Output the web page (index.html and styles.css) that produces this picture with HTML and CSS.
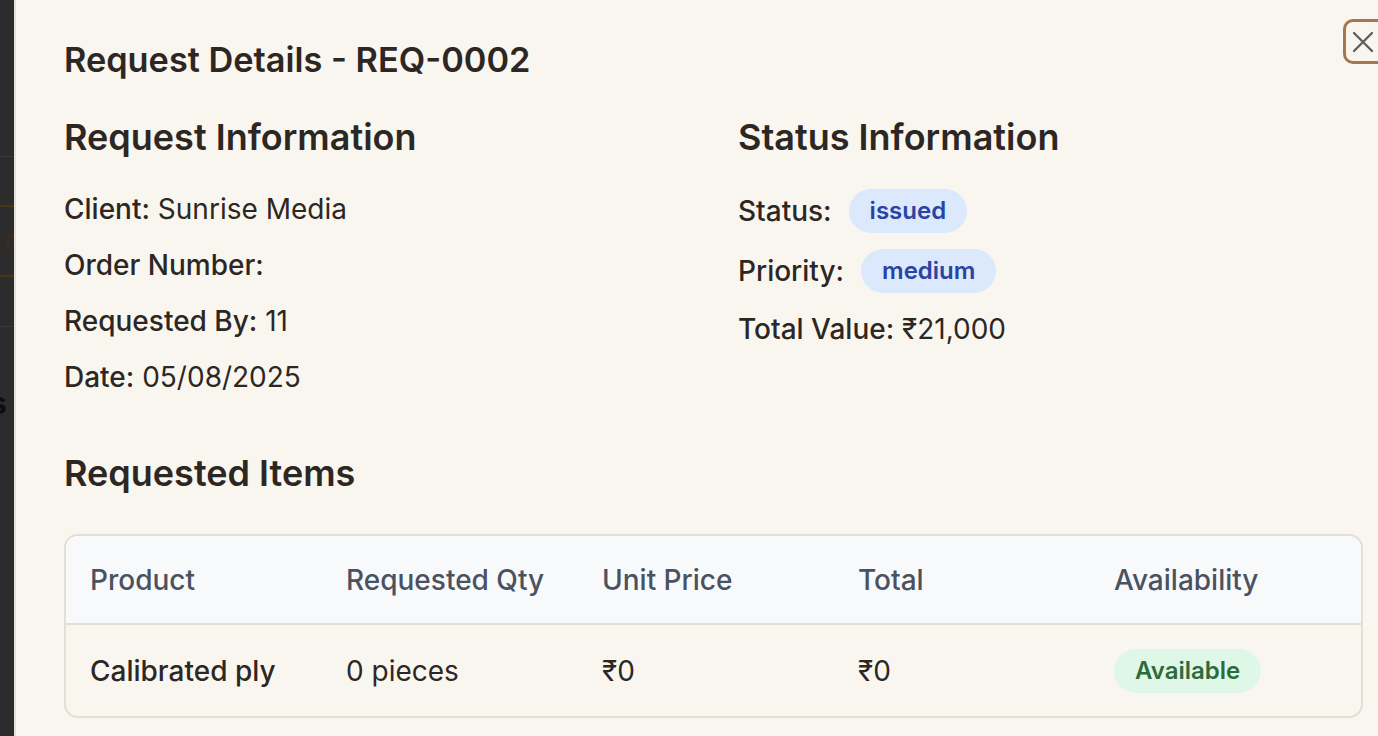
FILE: index.html
```html
<!DOCTYPE html>
<html lang="en">
<head>
<meta charset="utf-8">
<title>Request Details</title>
<link rel="stylesheet" href="styles.css">
</head>
<body>
<div class="backdrop">
  <div class="under">
    <div class="under-line l1"></div>
    <div class="under-cell"><span>r</span></div>
    <div class="under-line l2"></div>
    <div class="under-s">s</div>
  </div>
</div>
<div class="modal">
  <button class="close" aria-label="Close">
    <svg width="22" height="22" viewBox="0 0 22 22"><path d="M2 2 L20 20 M20 2 L2 20" stroke="#5c5c5c" stroke-width="2.3" stroke-linecap="round"/></svg>
  </button>
  <h1 class="title">Request Details - REQ-0002</h1>
  <div class="info-grid">
    <section>
      <h2 class="section-title">Request Information</h2>
      <div class="fields">
        <p><span class="label">Client:</span> Sunrise Media</p>
        <p><span class="label">Order Number:</span> </p>
        <p><span class="label">Requested By:</span> 11</p>
        <p><span class="label">Date:</span> 05/08/2025</p>
      </div>
    </section>
    <section>
      <h2 class="section-title">Status Information</h2>
      <div class="fields">
        <p class="badge-row"><span class="label">Status:</span><span class="badge blue">issued</span></p>
        <p class="badge-row"><span class="label">Priority:</span><span class="badge blue">medium</span></p>
        <p><span class="label">Total Value:</span> ₹21,000</p>
      </div>
    </section>
  </div>
  <h2 class="section-title items-title">Requested Items</h2>
  <div class="table">
    <div class="row head">
      <div>Product</div>
      <div>Requested Qty</div>
      <div>Unit Price</div>
      <div>Total</div>
      <div>Availability</div>
    </div>
    <div class="row body">
      <div class="prod">Calibrated ply</div>
      <div>0 pieces</div>
      <div>₹0</div>
      <div>₹0</div>
      <div><span class="badge green">Available</span></div>
    </div>
  </div>
</div>
</body>
</html>
```

FILE: styles.css
```css
* { box-sizing: border-box; }
html, body {
  margin: 0;
  padding: 0;
  width: 1378px;
  height: 736px;
  overflow: hidden;
  background: #2c2c2c;
  font-family: Inter, "Noto Sans", sans-serif;
  color: #2d2723;
}
.backdrop {
  position: absolute;
  inset: 0;
  background: #2c2c2c;
}
.under {
  position: absolute;
  left: 0;
  top: 0;
  width: 14px;
  height: 736px;
}
.under-line {
  position: absolute;
  left: 0;
  width: 14px;
  height: 1px;
  background: #383838;
}
.l1 { top: 156px; }
.l2 { top: 326px; }
.under-cell {
  position: absolute;
  left: -10px;
  top: 205px;
  width: 24px;
  height: 72px;
  border-top: 2px solid #4a3318;
  border-bottom: 2px solid #4a3318;
  color: #3e2c1c;
  font-size: 26px;
  line-height: 68px;
  text-align: right;
}
.under-s {
  position: absolute;
  left: -10px;
  top: 386px;
  font-size: 30px;
  font-weight: 700;
  color: #0e0e0e;
  line-height: 34px;
}
.modal {
  position: absolute;
  left: 14px;
  top: -9px;
  width: 1420px;
  height: 760px;
  background: #f9f6f0;
  border-left: 2px solid #e6e1d9;
  padding: 48px 48px 0 48px;
}
.close {
  position: absolute;
  left: 1327px;
  top: 28px;
  width: 46px;
  height: 45px;
  border: 3px solid #a6764f;
  border-radius: 10px;
  background: transparent;
  display: flex;
  align-items: center;
  justify-content: flex-start;
  padding: 0 0 0 6px;
}
.title {
  margin: 0;
  font-size: 34.3px;
  line-height: 42px;
  font-weight: 600;
}
.info-grid {
  display: grid;
  grid-template-columns: 625px 625px;
  column-gap: 49px;
  margin-top: 34px;
}
.section-title {
  margin: 0;
  font-size: 36px;
  line-height: 44px;
  font-weight: 600;
}
.fields {
  margin-top: 30px;
  display: flex;
  flex-direction: column;
  gap: 16px;
}
.fields p {
  margin: 0;
  font-size: 28px;
  line-height: 40px;
  display: flex;
  align-items: center;
  white-space: pre;
}
.label { font-weight: 500; }
.badge-row { gap: 17px; height: 44px; }
.badge {
  display: inline-flex;
  align-items: center;
  height: 44px;
  padding: 0 21px;
  border-radius: 22px;
  font-size: 24px;
  line-height: 44px;
  font-weight: 600;
}
.blue { background: #dce8fb; color: #2a43a6; }
.green { background: #dff7e6; color: #2e6a3b; }
.items-title { margin-top: 54px; }
.table {
  margin-top: 39px;
  width: 1299px;
  border: 2px solid #e3ded6;
  border-radius: 14px;
  overflow: hidden;
}
.row {
  display: grid;
  grid-template-columns: 256px 256px 256px 256px 1fr;
  align-items: center;
  padding-left: 24px;
}
.row div { font-size: 28px; }
.head {
  height: 89px;
  background: #f8f9fb;
  color: #4a5260;
  font-weight: 500;
  border-bottom: 2px solid #e3ded6;
}
.body {
  height: 91px;
}
.prod { font-weight: 500; }
```
